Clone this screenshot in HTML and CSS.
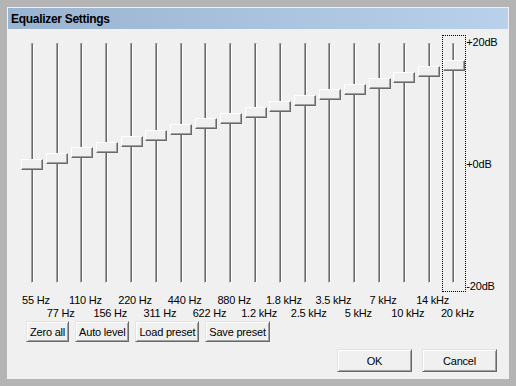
FILE: index.html
```html
<!DOCTYPE html>
<html lang="en">
<head>
    <meta charset="UTF-8">
    <meta name="viewport" content="width=device-width, initial-scale=1.0">
    <title>Equalizer Settings</title>
    <link rel="stylesheet" href="styles.css">
</head>
<body>

<div class="window">
    <div class="frame">
        <div class="titlebar">Equalizer Settings</div>

        <div class="content">
            <!-- One band per column: slider on top, frequency label below -->
            <div class="eq">
                <div class="band"><div class="slider"><div class="track"></div><div class="thumb" style="--db: 0"></div></div><div class="freq">55 Hz</div></div>
                <div class="band low"><div class="slider"><div class="track"></div><div class="thumb" style="--db: 1"></div></div><div class="freq">77 Hz</div></div>
                <div class="band"><div class="slider"><div class="track"></div><div class="thumb" style="--db: 2"></div></div><div class="freq">110 Hz</div></div>
                <div class="band low"><div class="slider"><div class="track"></div><div class="thumb" style="--db: 3"></div></div><div class="freq">156 Hz</div></div>
                <div class="band"><div class="slider"><div class="track"></div><div class="thumb" style="--db: 4"></div></div><div class="freq">220 Hz</div></div>
                <div class="band low"><div class="slider"><div class="track"></div><div class="thumb" style="--db: 5"></div></div><div class="freq">311 Hz</div></div>
                <div class="band"><div class="slider"><div class="track"></div><div class="thumb" style="--db: 6"></div></div><div class="freq">440 Hz</div></div>
                <div class="band low"><div class="slider"><div class="track"></div><div class="thumb" style="--db: 7"></div></div><div class="freq">622 Hz</div></div>
                <div class="band"><div class="slider"><div class="track"></div><div class="thumb" style="--db: 8"></div></div><div class="freq">880 Hz</div></div>
                <div class="band low"><div class="slider"><div class="track"></div><div class="thumb" style="--db: 9"></div></div><div class="freq">1.2 kHz</div></div>
                <div class="band"><div class="slider"><div class="track"></div><div class="thumb" style="--db: 10"></div></div><div class="freq">1.8 kHz</div></div>
                <div class="band low"><div class="slider"><div class="track"></div><div class="thumb" style="--db: 11"></div></div><div class="freq">2.5 kHz</div></div>
                <div class="band"><div class="slider"><div class="track"></div><div class="thumb" style="--db: 12"></div></div><div class="freq">3.5 kHz</div></div>
                <div class="band low"><div class="slider"><div class="track"></div><div class="thumb" style="--db: 13"></div></div><div class="freq">5 kHz</div></div>
                <div class="band"><div class="slider"><div class="track"></div><div class="thumb" style="--db: 14"></div></div><div class="freq">7 kHz</div></div>
                <div class="band low"><div class="slider"><div class="track"></div><div class="thumb" style="--db: 15"></div></div><div class="freq">10 kHz</div></div>
                <div class="band"><div class="slider"><div class="track"></div><div class="thumb" style="--db: 16"></div></div><div class="freq">14 kHz</div></div>
                <div class="band low"><div class="slider focus"><div class="track"></div><div class="thumb" style="--db: 17"></div></div><div class="freq">20 kHz</div></div>

                <div class="scale">
                    <span>+20dB</span>
                    <span>+0dB</span>
                    <span>-20dB</span>
                </div>
            </div>

            <div class="tools">
                <button class="btn">Zero all</button>
                <button class="btn">Auto level</button>
                <button class="btn">Load preset</button>
                <button class="btn">Save preset</button>
            </div>

            <div class="actions">
                <button class="btn big">OK</button>
                <button class="btn big">Cancel</button>
            </div>
        </div>
    </div>
</div>

</body>
</html>
```

FILE: styles.css
```css
/* Page and window frame */
body {
    margin: 0;
    background: #b4b4b4;
    font-family: "Liberation Sans", Arial, sans-serif;
    font-size: 11px;
    letter-spacing: -0.2px;
    color: #000;
}

.window {
    width: 516px;
    height: 386px;
    box-sizing: border-box;
    padding: 7px;
}

.frame {
    height: 100%;
    box-sizing: border-box;
    padding: 1px;
    background: #f0f0f0;
    display: flex;
    flex-direction: column;
}

.titlebar {
    height: 21px;
    box-sizing: border-box;
    padding: 2px 0 0 3px;
    line-height: 19px;
    background: linear-gradient(to right, #99b4d1, #b9d1ea);
    font-size: 12px;
    font-weight: bold;
    letter-spacing: -0.3px;
}

.content {
    flex: 1;
    padding-top: 6px;
}

/* Equalizer bands */
.eq {
    display: grid;
    grid-template-columns: repeat(18, 24.8px) auto;
    align-items: start;
    margin-left: 12px;
}

.band {
    display: flex;
    flex-direction: column;
    align-items: center;
}

.slider {
    position: relative;
    width: 24px;
    height: 257px;
    box-sizing: border-box;
    padding: 8px 0 9px;
    display: flex;
    justify-content: center;
}

.track {
    width: 3px;
    box-sizing: border-box;
    border: 1px solid;
    border-color: #a0a0a0 #fff #fff #a0a0a0;
    background: #696969;
}

.thumb {
    position: absolute;
    left: 1px;
    top: calc(124px - var(--db) * 5.8px);
    width: 22px;
    height: 11px;
    box-sizing: border-box;
    background: #f0f0f0;
    border: 1px solid;
    border-color: #fff #696969 #696969 #fff;
    box-shadow: inset -1px -1px #a0a0a0;
}

/* Keyboard focus rectangle */
.slider.focus::after {
    content: '';
    position: absolute;
    top: 0;
    right: 0;
    bottom: 0;
    left: 0;
    border: 1px dotted #000;
}

.freq {
    width: 50px;
    margin: 2px 0 0 7px;
    line-height: 13px;
    text-align: center;
    white-space: nowrap;
}

.band.low .freq {
    margin-top: 15px;
}

.scale {
    height: 258px;
    box-sizing: border-box;
    padding-top: 1px;
    display: flex;
    flex-direction: column;
    justify-content: space-between;
    line-height: 13px;
}

/* Buttons */
.btn {
    height: 21px;
    padding: 0 3px;
    font: inherit;
    letter-spacing: inherit;
    color: #000;
    background: #f0f0f0;
    border: 1px solid;
    border-color: #e3e3e3 #696969 #696969 #e3e3e3;
    border-radius: 0;
    box-shadow: inset 1px 1px #fff, inset -1px -1px #a0a0a0;
}

.btn.big {
    width: 75px;
    height: 23px;
}

.tools {
    display: flex;
    gap: 6px;
    margin: 1px 0 0 18px;
}

.actions {
    display: flex;
    justify-content: flex-end;
    gap: 10px;
    margin-top: 7px;
    padding-right: 11px;
}
```
